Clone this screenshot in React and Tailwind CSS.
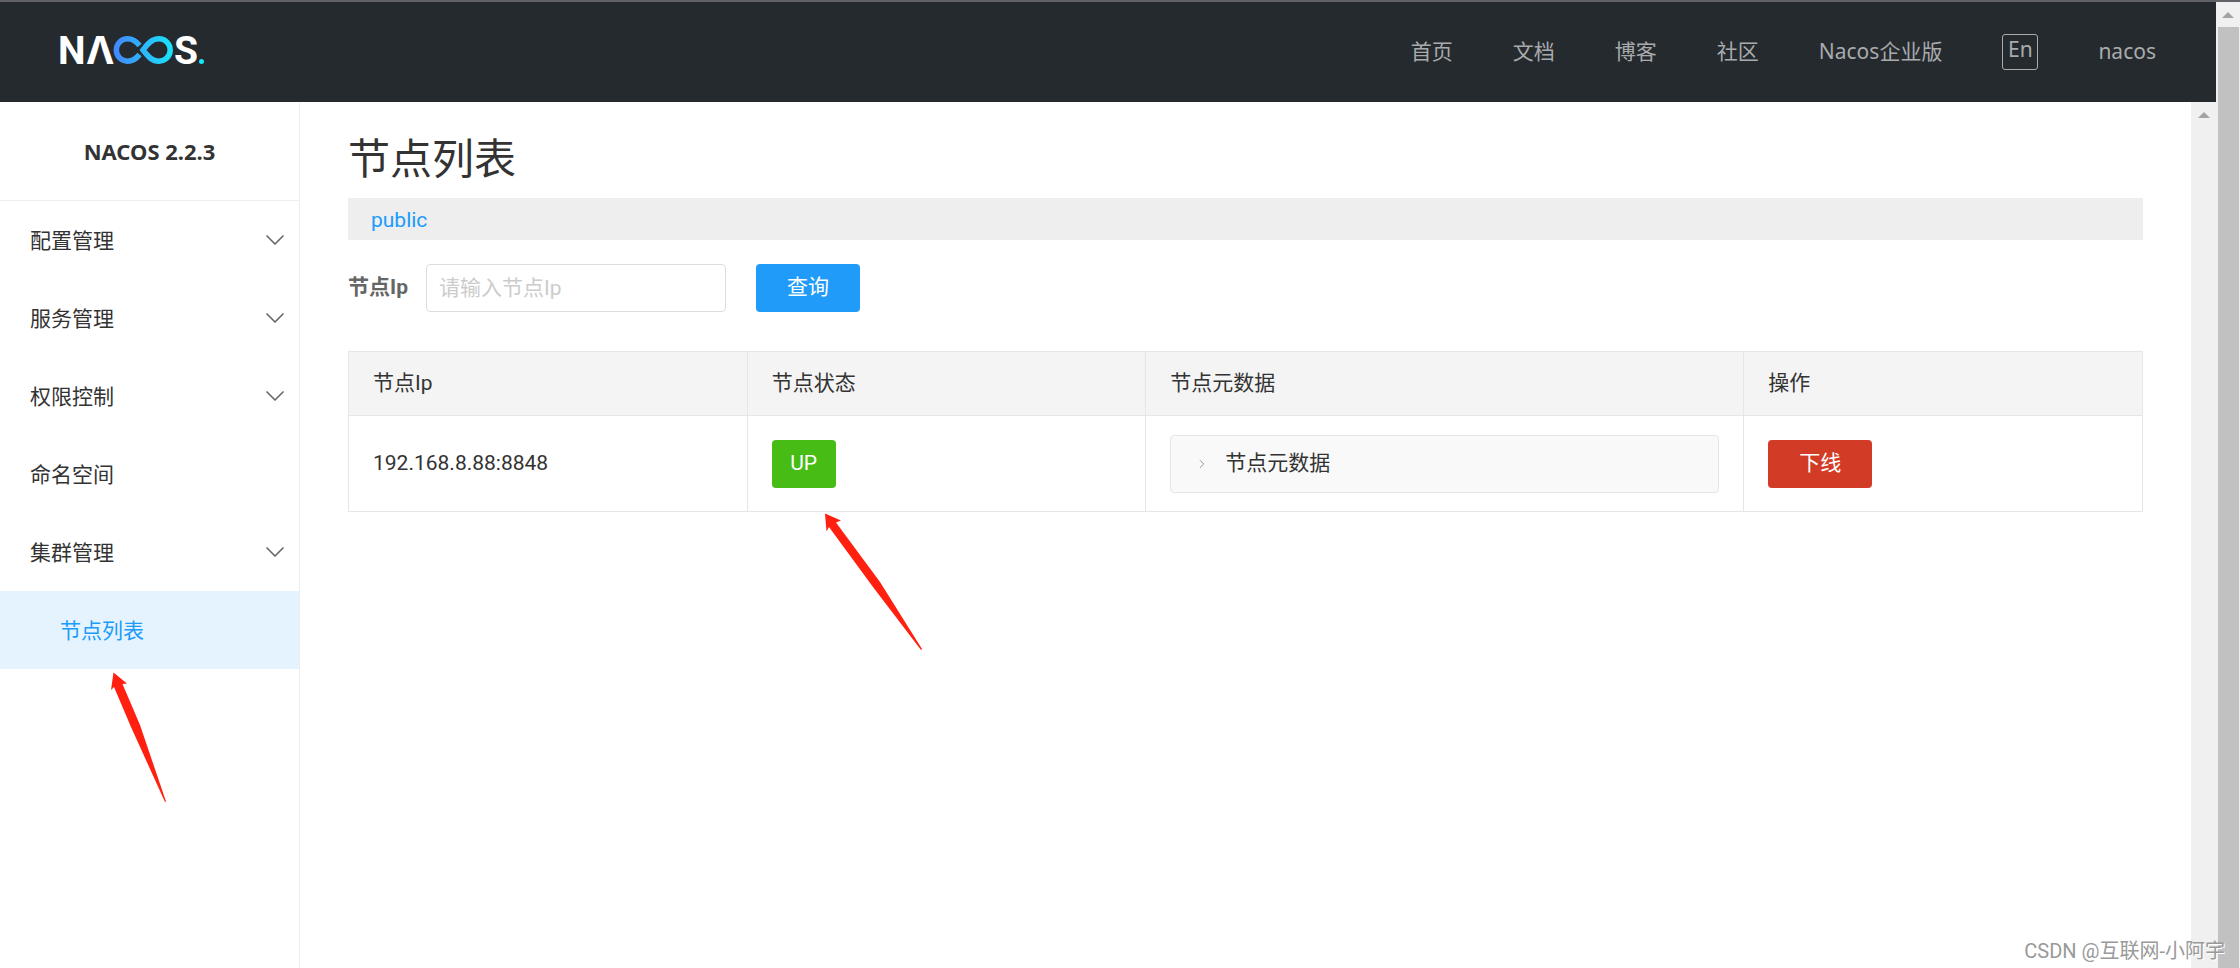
import { ChevronDown, ChevronRight } from "lucide-react";

const navLinks = ["首页", "文档", "博客", "社区", "Nacos企业版"];

const menu = [
  { label: "配置管理", expandable: true },
  { label: "服务管理", expandable: true },
  { label: "权限控制", expandable: true },
  { label: "命名空间" },
  { label: "集群管理", expandable: true, children: ["节点列表"] },
];

const nodes = [{ ip: "192.168.8.88:8848", state: "UP" }];

function Logo() {
  return (
    <svg width="152" height="56" viewBox="54 24 152 56" role="img" aria-label="Nacos">
      <defs>
        <linearGradient id="loop" gradientUnits="userSpaceOnUse" x1="114" y1="50" x2="174" y2="50">
          <stop offset="0" stopColor="#4287ff" />
          <stop offset="1" stopColor="#18e6fa" />
        </linearGradient>
      </defs>
      <g fill="#fff" fontFamily="Roboto, sans-serif" fontWeight="700" fontSize="39">
        <text x="58" y="64">N</text>
        <text x="86" y="64" fontFamily="Inter, sans-serif" fontSize="38">Λ</text>
        <text x="174" y="64">S</text>
      </g>
      <g fill="none" stroke="url(#loop)" strokeWidth="5.5">
        <path d="M139.5 45.500C136 41 132 38.8 127.500 38.8a11.2 11.2 0 0 0 0 22.4C132 61.2 136 59 139.500 54.500" />
        <path d="M143 50C148.500 43 152 38.8 159 38.8a11.2 11.2 0 0 1 0 22.4C152 61.2 148.500 57 143 50Z" />
      </g>
      <circle cx="201.5" cy="61.5" r="2.5" fill="#18e6fa" />
    </svg>
  );
}

function Header() {
  return (
    <header className="flex h-[100px] items-center justify-between bg-[#252a2f] pr-[60px] pl-[54px] text-[21px] text-[#a8aaac]">
      <a href="#" className="block">
        <Logo />
      </a>
      <nav className="flex items-center gap-[60px] font-['Noto_Sans','Noto_Sans_CJK_SC',sans-serif]">
        {navLinks.map((label) => (
          <a key={label} href="#">
            {label}
          </a>
        ))}
        <button className="flex h-9 w-9 items-center justify-center rounded-[3px] border border-[#a8aaac] pb-1">
          En
        </button>
        <a href="#">nacos</a>
      </nav>
    </header>
  );
}

function Sidebar() {
  return (
    <aside className="w-[300px] shrink-0 border-r border-[#eee]">
      <h1 className="flex h-[99px] items-center justify-center border-b border-[#eee] font-['Noto_Sans',sans-serif] text-[22px] font-bold">
        NACOS 2.2.3
      </h1>
      <ul>
        {menu.map((item) => (
          <li key={item.label}>
            <a href="#" className="flex h-[78px] items-center justify-between pr-2 pl-[30px]">
              <span className="pt-1">{item.label}</span>
              {item.expandable && <ChevronDown size={32} strokeWidth={1.25} className="text-[#666]" />}
            </a>
            {item.children?.map((child) => (
              <div key={child} className="relative">
                <a href="#" className="flex h-[78px] items-center bg-[#e4f3fe] pl-[60px] text-[#209bfa]">
                  <span className="pt-1">{child}</span>
                </a>
                <svg className="absolute top-20 left-[110px]" width="58" height="132" viewBox="110 671 58 132" fill="#ff2010">
                  <path d="M113.5 672.5L127 683.5L122.5 684L140 725L166 801.5L165 802L131 727L114 687L111 690Z" />
                </svg>
              </div>
            ))}
          </li>
        ))}
      </ul>
    </aside>
  );
}

function NodeTable() {
  return (
    <table className="w-full table-fixed border-collapse border border-[#e6e6e6] text-left">
      <thead className="bg-[#f4f4f4]">
        <tr className="h-16">
          <th className="w-2/9 border border-[#e6e6e6] px-6 font-normal">节点Ip</th>
          <th className="w-2/9 border border-[#e6e6e6] px-6 font-normal">节点状态</th>
          <th className="w-3/9 border border-[#e6e6e6] px-6 font-normal">节点元数据</th>
          <th className="w-2/9 border border-[#e6e6e6] px-6 font-normal">操作</th>
        </tr>
      </thead>
      <tbody>
        {nodes.map((node) => (
          <tr key={node.ip} className="h-24">
            <td className="border border-[#e6e6e6] px-6">{node.ip}</td>
            <td className="border border-[#e6e6e6] px-6">
              <div className="relative flex h-12 w-16 items-center justify-center rounded bg-[#46bc15] text-white">
                {node.state}
                <svg className="absolute top-[72px] left-[52px]" width="100" height="140" viewBox="824 511 100 140" fill="#ff2010">
                  <path d="M825 512.5L841 519.5L836 521.5L880 581L922 648L921 649L873 586L829 526L826.5 530.5Z" />
                </svg>
              </div>
            </td>
            <td className="border border-[#e6e6e6] px-6">
              <button className="flex h-[58px] w-full items-center gap-4 rounded border border-[#e6e6e6] bg-[#f9f9f9] pl-6">
                <ChevronRight size={14} strokeWidth={1.5} className="text-[#888]" />
                节点元数据
              </button>
            </td>
            <td className="border border-[#e6e6e6] px-6">
              <button className="h-12 w-[104px] rounded bg-[#d23c26] text-white">下线</button>
            </td>
          </tr>
        ))}
      </tbody>
    </table>
  );
}

function Main() {
  return (
    <main className="min-w-0 flex-1 px-12 pt-[30px]">
      <h2 className="text-[42px] leading-[56px]">节点列表</h2>
      <div className="mt-2.5 flex h-[42px] items-center bg-[#eee] px-[23px] pt-1">
        <a href="#" className="text-[#209bfa]">
          public
        </a>
      </div>
      <form className="mt-6 mb-[39px] flex items-center">
        <label htmlFor="ip" className="font-bold text-[#666]">
          节点Ip
        </label>
        <input
          id="ip"
          type="text"
          placeholder="请输入节点Ip"
          className="ml-[18px] h-12 w-[300px] rounded border border-[#ddd] px-3 placeholder:text-[#ccc]"
        />
        <button type="button" className="ml-[30px] h-12 w-[104px] rounded bg-[#209bfa] text-white">
          查询
        </button>
      </form>
      <NodeTable />
    </main>
  );
}

function ScrollArrow() {
  return (
    <svg width="12" height="6" viewBox="0 0 12 6" fill="#a3a3a3">
      <path d="M6 0L12 6H0Z" />
    </svg>
  );
}

export default function App() {
  return (
    <div className="relative flex min-h-screen flex-col bg-white font-[Roboto,'Noto_Sans_CJK_SC',sans-serif] text-[21px] text-[#333]">
      <div className="h-0.5 bg-[#626167]"></div>
      <div className="flex flex-1">
        <div className="flex min-w-0 flex-1 flex-col">
          <Header />
          <div className="flex flex-1">
            <Sidebar />
            <Main />
            {/* Content scrollbar */}
            <div className="flex w-[25px] justify-center bg-[#f0f0f0] pt-2.5">
              <ScrollArrow />
            </div>
          </div>
        </div>
        {/* Page scrollbar */}
        <div className="flex w-6 flex-col items-center bg-[#f0f0f0] pt-2.5">
          <ScrollArrow />
          <div className="mt-[9px] w-[21px] flex-1 bg-[#c1c1c1]"></div>
        </div>
      </div>
      <div className="absolute right-[15px] bottom-0.5 text-[20px] text-[#999] [text-shadow:1px_1px_0_#fff]">
        CSDN @互联网-小阿宇
      </div>
    </div>
  );
}
